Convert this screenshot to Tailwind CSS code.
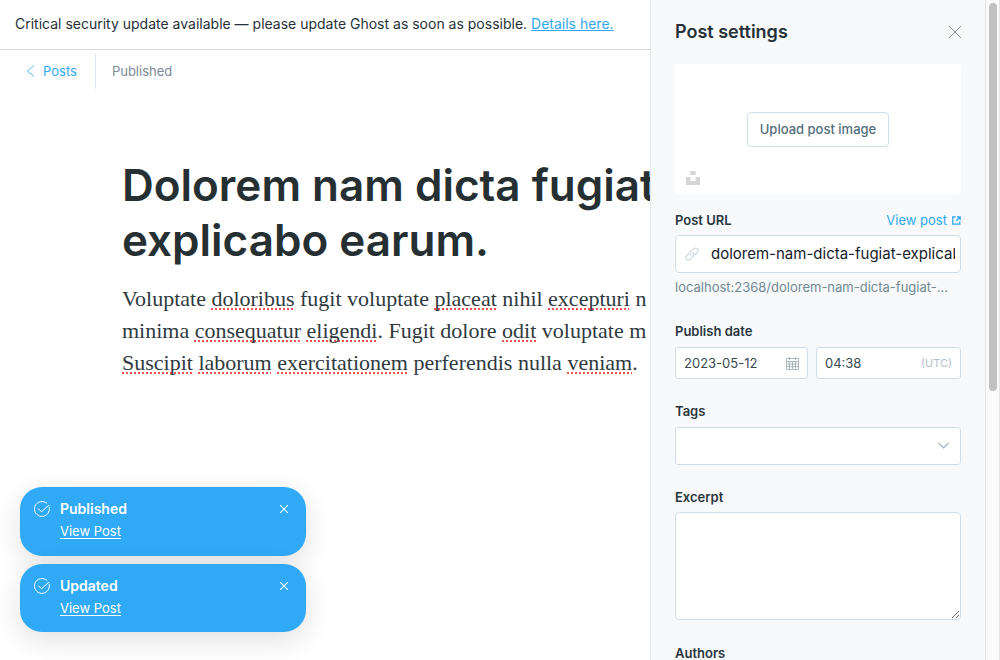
<!DOCTYPE html>
<html lang="en">
<head>
<meta charset="utf-8">
<meta name="viewport" content="width=device-width, initial-scale=1">
<title>Post settings</title>
<script src="https://cdn.jsdelivr.net/npm/@tailwindcss/browser@4"></script>
</head>
<body class="relative flex h-screen flex-col overflow-hidden bg-white font-['Inter',sans-serif] text-[13px] leading-5 text-[#394047]">

<div class="flex min-h-0 flex-1">
  <div class="flex min-w-0 flex-1 flex-col overflow-hidden">
    <div class="border-b border-[#d5d9dc] px-[15px] pt-[14px] pb-[15px] text-sm text-[#263238]">
      Critical security update available — please update Ghost as soon as possible.
      <a href="#" class="text-[#30a9f0] underline">Details here.</a>
    </div>
    <header class="flex items-center pt-[3px] pl-[26px]">
      <a href="#" class="flex items-center gap-2 pr-[18px] text-[#30a9f0]">
        <svg class="h-3 w-[9px]" viewBox="0 0 9 12" fill="none" stroke="currentColor" stroke-width=".8" stroke-linecap="round" stroke-linejoin="round"><path d="M8 .5 1.5 6 8 11.5"/></svg>
        Posts
      </a>
      <div class="flex h-9 items-center border-l border-[#dfe8f0] pl-4 text-[#7c8b9a]">Published</div>
    </header>
    <main class="pt-[69px] pl-[122px]">
      <h1 class="text-[44px] leading-[55px] font-semibold whitespace-nowrap text-[#263033]">Dolorem nam dicta fugiat<br>explicabo earum.</h1>
      <p class="mt-[15px] font-['Liberation_Serif',serif] text-[22px] leading-8 whitespace-nowrap text-[#2f3a40] [&_u]:decoration-[#f4544f] [&_u]:decoration-dotted [&_u]:decoration-2 [&_u]:underline-offset-2 [&_u]:[text-decoration-skip-ink:none]">Voluptate <u>doloribus</u> fugit voluptate <u>placeat</u> nihil <u>excepturi</u> n<br>minima <u>consequatur</u> <u>eligendi</u>. Fugit dolore <u>odit</u> voluptate m<br><u>Suscipit</u> <u>laborum</u> <u>exercitationem</u> perferendis nulla <u>veniam</u>.</p>
    </main>
  </div>

  <aside class="w-[335px] shrink-0 overflow-hidden border-l border-[#dfe8f0] bg-[#f7f9fb] px-6">
    <div class="flex h-16 items-center justify-between">
      <h2 class="text-lg leading-6 font-semibold text-[#263238]">Post settings</h2>
      <button type="button" aria-label="Close settings" class="flex size-3 text-[#6b7880]">
        <svg class="size-3" viewBox="0 0 12 12" fill="none" stroke="currentColor" stroke-width=".8"><path d="m0 0 12 12M12 0 0 12"/></svg>
      </button>
    </div>
    <div class="relative flex h-[130px] items-center justify-center rounded-[3px] bg-white">
      <button type="button" class="h-[35px] rounded border border-[#cfdde8] px-3 font-medium text-[#546e7a]">Upload post image</button>
      <button type="button" aria-label="Choose from Unsplash" class="absolute bottom-[9px] left-[11px]">
        <svg class="size-[14px]" viewBox="0 0 14 14" fill="#d5d5d5"><path d="M4.400 0h5.200v4H4.400zM0 6h4.400v4h5.200V6H14v8H0z"/></svg>
      </button>
    </div>

    <div class="mt-4 flex items-center justify-between">
      <label for="url" class="font-semibold text-[#2a363d]">Post URL</label>
      <a href="#" class="flex items-center gap-[5px] text-[#30a9f0]">View post
        <svg class="size-[9px]" viewBox="0 0 9 9" fill="none" stroke="currentColor" stroke-width="1.300"><path d="M3.500 1H.8v7.200h7V5.500M5 .8h3.200V4M8 1 4 5"/></svg>
      </a>
    </div>
    <div class="mt-[5px] flex h-[38px] items-center gap-3 rounded border border-[#cfdde8] bg-white pr-[5px] pl-[9px]">
      <svg class="size-[14px] shrink-0" viewBox="0 0 14 14" fill="none" stroke="#c9d6df" stroke-width="1.200" stroke-linecap="round"><path d="M6 8.200a2.600 2.600 0 0 1 0-3.600l2.800-2.900a2.500 2.500 0 0 1 3.500 3.600L10.300 7.500M8 5.800a2.600 2.600 0 0 1 0 3.600l-2.800 2.900a2.500 2.500 0 0 1-3.500-3.600L3.700 6.500"/></svg>
      <input id="url" type="text" value="dolorem-nam-dicta-fugiat-explicabo-earum" class="min-w-0 flex-1 text-[15px] text-[#15212a] outline-none">
    </div>
    <p class="mt-1 truncate pr-2 text-[#738a94]">localhost:2368/dolorem-nam-dicta-fugiat-…</p>

    <label for="date" class="mt-6 block font-semibold text-[#2a363d]">Publish date</label>
    <div class="mt-[6px] flex gap-2">
      <div class="flex h-8 w-[133px] shrink-0 items-center rounded-[3px] border border-[#cfdde8] bg-white px-2">
        <input id="date" type="text" value="2023-05-12" class="min-w-0 flex-1 text-[#394a52] outline-none">
        <svg class="size-[13px] shrink-0" viewBox="0 0 13 13" fill="none" stroke="#9aa9b3" stroke-width=".8"><path d="M.5 1.500h12v11H.5zM.5 4.500h12M.5 7h12M.5 9.700h12M3.500 4.500v8M6.500 4.500v8M9.500 4.500v8M3.500 0v3M9.500 0v3"/></svg>
      </div>
      <div class="flex h-8 min-w-0 flex-1 items-center rounded-[3px] border border-[#cfdde8] bg-white px-2">
        <input id="time" type="text" aria-label="Publish time" value="04:38" class="w-full min-w-0 flex-1 text-[#394a52] outline-none">
        <span class="text-[11px] text-[#b3c0c9]">(UTC)</span>
      </div>
    </div>

    <label for="tags" class="mt-[22px] block font-semibold text-[#2a363d]">Tags</label>
    <div class="relative mt-[6px]">
      <select id="tags" class="block h-[38px] w-full appearance-none rounded-[3px] border border-[#cfdde8] bg-white"><option></option></select>
      <svg class="pointer-events-none absolute top-[15px] right-3 h-[7px] w-[11px]" viewBox="0 0 11 7" fill="none" stroke="#9baebc" stroke-width="1.200"><path d="m.5.800 5 5 5-5"/></svg>
    </div>

    <label for="excerpt" class="mt-[22px] block font-semibold text-[#2a363d]">Excerpt</label>
    <textarea id="excerpt" class="mt-[5px] block h-[108px] w-full rounded border border-[#cfdde8] bg-white outline-none"></textarea>

    <h3 class="mt-[23px] font-semibold text-[#2a363d]">Authors</h3>
  </aside>

  <div class="w-[15px] shrink-0 border-x border-[#e6e6e6] bg-[#fafafa] pt-[3px]">
    <div class="mx-auto h-[388px] w-2 rounded-full bg-[#c1c1c1]"></div>
  </div>
</div>

<div class="absolute bottom-7 left-5 flex w-[286px] flex-col gap-2 text-white">
  <article class="flex h-[69px] items-start rounded-[22px] bg-[#30a9f6] pt-3 pr-[18px] pl-[14px] shadow-[0_8px_28px_rgba(0,0,0,0.12)]">
    <svg class="mt-[2px] mr-[10px] size-4" viewBox="0 0 16 16" fill="none" stroke="currentColor" stroke-linecap="round" stroke-linejoin="round"><path d="m4.500 7.800 3 3 7.300-6.600M15.200 6A7.500 7.500 0 1 1 12.800 2.200"/></svg>
    <div class="flex-1">
      <h4 class="text-sm leading-5 font-semibold">Published</h4>
      <a href="#" class="mt-[2px] block underline underline-offset-2">View Post</a>
    </div>
    <button type="button" aria-label="Dismiss" class="mt-[6px]"><svg class="size-2" viewBox="0 0 8 8" fill="none" stroke="currentColor" stroke-width="1.100"><path d="m0 0 8 8M8 0 0 8"/></svg></button>
  </article>
  <article class="flex h-[68px] items-start rounded-[22px] bg-[#30a9f6] pt-3 pr-[18px] pl-[14px] shadow-[0_8px_28px_rgba(0,0,0,0.12)]">
    <svg class="mt-[2px] mr-[10px] size-4" viewBox="0 0 16 16" fill="none" stroke="currentColor" stroke-linecap="round" stroke-linejoin="round"><path d="m4.500 7.800 3 3 7.300-6.600M15.200 6A7.500 7.500 0 1 1 12.800 2.200"/></svg>
    <div class="flex-1">
      <h4 class="text-sm leading-5 font-semibold">Updated</h4>
      <a href="#" class="mt-[2px] block underline underline-offset-2">View Post</a>
    </div>
    <button type="button" aria-label="Dismiss" class="mt-[6px]"><svg class="size-2" viewBox="0 0 8 8" fill="none" stroke="currentColor" stroke-width="1.100"><path d="m0 0 8 8M8 0 0 8"/></svg></button>
  </article>
</div>
</body>
</html>
